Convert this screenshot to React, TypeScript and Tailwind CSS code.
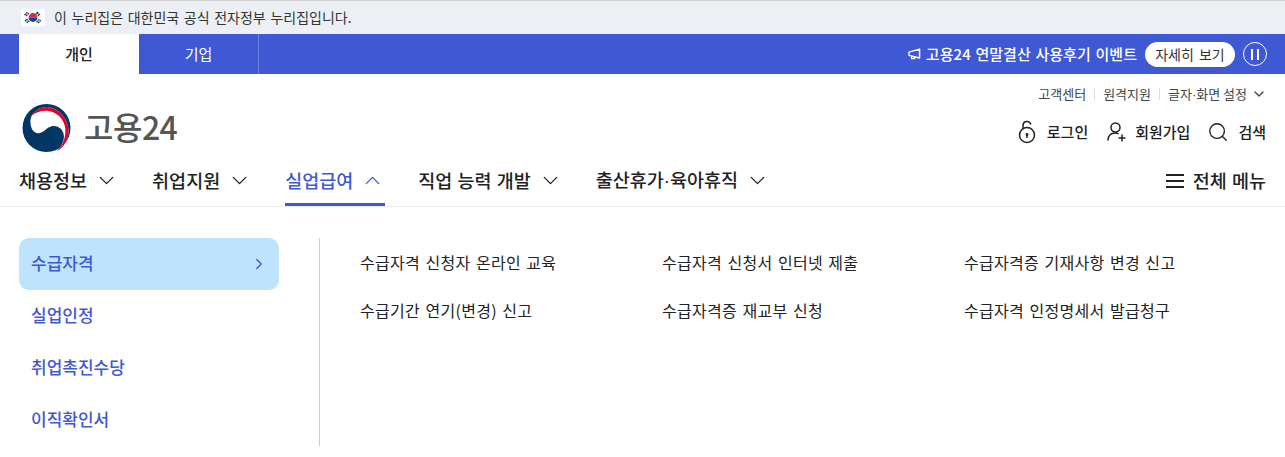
import React from "react";
import { ChevronDown, ChevronUp, ChevronRight, Search } from "lucide-react";

const FONT = "font-['Noto_Sans_CJK_KR','Noto_Sans',sans-serif]";

function Flag() {
  return (
    <svg width="24" height="17" viewBox="0 0 24 17" className="shrink-0">
      <rect width="24" height="17" fill="#fff" />
      <path d="M7.600 8.500a4.400 4.400 0 0 1 8.800 0z" fill="#cd2e3a" />
      <path d="M7.600 8.500a4.400 4.400 0 0 0 8.800 0z" fill="#0047a0" />
      <g stroke="#333" strokeWidth="1.300" strokeDasharray="1.800 .5">
        <path d="M3.500 6 6.500 3M5 7 8 4" />
        <path d="M16 3 19 6M15 4 18 7" />
        <path d="M4 11 7 14M5.500 10 8.500 13" />
        <path d="M17 14 20 11M15.500 13 18.500 10" />
      </g>
    </svg>
  );
}

function Logo() {
  return (
    <svg width="49" height="48" viewBox="0 0 48 48" className="shrink-0">
      <circle cx="24" cy="24" r="24" fill="#003764" />
      <path d="M34 47.500C42 43 46.500 35 46 26C45 13 35 3.500 24 3C17.500 3 12 7 9 12C7.500 15.500 7.500 20 9 24C10.500 28 14 30 17.500 29C21 28 23 25.500 26 23.500C30 21 35 21.500 38.500 25C42.500 29 42 36 39.500 40C38 43 36 45.500 34 47.500Z" fill="#fff" />
      <path d="M34 47.500C42 43 46.500 35 46 26C45 13 35 3.500 24 3C17.500 3 12 7 9 12C13 8.500 18 6.500 24 6.800C34 7.500 42 15 42.800 25C43.500 34 40 42 34 47.500Z" fill="#e2002d" />
    </svg>
  );
}

function LockIcon() {
  return (
    <svg width="20" height="24" viewBox="0 0 20 24" fill="none" stroke="#222" strokeWidth="1.500" className="shrink-0">
      <circle cx="10" cy="15" r="7.500" />
      <path d="M6 8.500V5.500a4 4 0 0 1 7.700-1.500" strokeLinecap="round" />
      <circle cx="10" cy="14.500" r="1.400" fill="#222" stroke="none" />
      <path d="M10 14.500v3.500" />
    </svg>
  );
}

function UserPlus() {
  return (
    <svg width="22" height="22" viewBox="0 0 22 22" fill="none" stroke="#222" strokeWidth="1.500" className="shrink-0">
      <circle cx="9.500" cy="6.500" r="4.500" />
      <path d="M2 19c.3-4.500 3-7 7-7 1.200 0 2.200.2 3 .6" strokeLinecap="round" />
      <path d="M16 13.500v7M12.500 17h7" />
    </svg>
  );
}

function Megaphone() {
  return (
    <svg width="13" height="12" viewBox="0 0 14 13" fill="none" stroke="#fff" strokeWidth="1.600" className="shrink-0">
      <path d="M1 4.500 12.500 1.200v9.600L1 8z" strokeLinejoin="round" />
      <path d="M4 8.500v3h3V9.500" />
    </svg>
  );
}

function MenuIcon() {
  return (
    <svg width="18" height="14" viewBox="0 0 18 14" stroke="#222" strokeWidth="2" className="shrink-0">
      <path d="M0 1h18M0 7h18M0 13h18" />
    </svg>
  );
}

function Dot() {
  return <span className="font-['Liberation_Sans']">·</span>;
}

function NavItem({ label, active }: { label: React.ReactNode; active?: boolean }) {
  return (
    <div className={active ? "flex h-full items-center gap-[7px] border-b-[3px] border-[#3f58d4] pb-[3px] text-[#3f58d4]" : "flex h-full items-center gap-[7px] border-b-[3px] border-transparent pb-[3px] text-[#222]"}>
      <span className="text-[18.500px] font-medium leading-none [word-spacing:1px]">{label}</span>
      {active ? <ChevronUp size={25} strokeWidth={1.300} /> : <ChevronDown size={25} strokeWidth={1.300} />}
    </div>
  );
}

const links = [
  "수급자격 신청자 온라인 교육",
  "수급자격 신청서 인터넷 제출",
  "수급자격증 기재사항 변경 신고",
  "수급기간 연기(변경) 신고",
  "수급자격증 재교부 신청",
  "수급자격 인정명세서 발급청구",
];

export default function App() {
  return (
    <div className={`${FONT} h-[457px] w-[1285px] overflow-hidden bg-white text-[#222]`}>
      <div className="flex h-[34px] items-center gap-[8px] border-t border-[#cfcfcf] bg-[#eceff4] pl-[21px] text-[14px]">
        <Flag />
        <span className="ml-[1px] text-[#333] [word-spacing:1.500px]">이 누리집은 대한민국 공식 전자정부 누리집입니다.</span>
      </div>

      <div className="flex h-[40px] items-stretch bg-[#3f58d4] pl-[19px] pr-[18px]">
        <div className="flex w-[120px] items-center justify-center bg-white text-[15px] font-medium text-[#222]">개인</div>
        <div className="flex w-[120px] items-center justify-center border-r border-[#6d80e0] text-[15px] text-white">기업</div>
        <div className="ml-auto flex items-center text-white">
          <Megaphone />
          <span className="ml-[5px] text-[15px] font-medium tracking-[0.05px] [word-spacing:1.200px]">고용24 연말결산 사용후기 이벤트</span>
          <span className="ml-[8px] flex h-[25px] w-[90px] items-center justify-center rounded-full bg-white text-[14px] text-[#333] [word-spacing:2px]">자세히 보기</span>
          <span className="ml-[8px] flex size-[24px] items-center justify-center gap-[4px] rounded-full border-[1.5px] border-white">
            <span className="h-[11px] w-[2px] bg-white" />
            <span className="h-[11px] w-[2px] bg-white" />
          </span>
        </div>
      </div>

      <div className="h-[133px] border-b border-[#ececec]">
        <div className="flex h-[87px] justify-between pl-[22px] pr-[19px]">
          <div className="flex items-start gap-[13px] pt-[30px]">
            <Logo />
            <span className="mt-[4px] text-[32px] leading-[36px] font-medium tracking-[-0.5px] text-[#555]">고용24</span>
          </div>
          <div className="flex flex-col items-end pt-[11px]">
            <div className="flex h-[18px] items-center text-[13px] text-[#444]">
              <span>고객센터</span>
              <span className="mx-[8px] h-[12px] w-px bg-[#ddd]" />
              <span>원격지원</span>
              <span className="mx-[8px] h-[12px] w-px bg-[#ddd]" />
              <span>글자<Dot />화면 설정</span>
              <ChevronDown size={16} strokeWidth={2} className="mr-[-1px] ml-[4px]" />
            </div>
            <div className="mt-[17px] flex items-center text-[15px] font-medium text-[#222]">
              <LockIcon />
              <span className="ml-[10px]">로그인</span>
              <span className="ml-[18px]"><UserPlus /></span>
              <span className="ml-[7px]">회원가입</span>
              <Search size={22} strokeWidth={1.500} className="ml-[17px]" />
              <span className="ml-[9px]">검색</span>
            </div>
          </div>
        </div>
        <div className="flex h-[45px] items-stretch justify-between pl-[19px] pr-[19px]">
          <div className="flex gap-[33px]">
            <NavItem label="채용정보" />
            <NavItem label="취업지원" />
            <NavItem label="실업급여" active />
            <NavItem label="직업 능력 개발" />
            <NavItem label={<>출산휴가<Dot />육아휴직</>} />
          </div>
          <div className="flex items-center gap-[9px] border-b-[3px] border-transparent pb-[3px]">
            <MenuIcon />
            <span className="text-[18.500px] leading-none font-medium [word-spacing:1px]">전체 메뉴</span>
          </div>
        </div>
      </div>

      <div className="flex px-[19px] pt-[31px]">
        <div className="w-[260px] shrink-0 text-[17px] font-medium text-[#3f58d4]">
          <div className="flex h-[52px] items-center justify-between rounded-[10px] bg-[#c0e3fd] pr-[11px] pb-[3px] pl-[12px]">
            <span>수급자격</span>
            <ChevronRight size={18} strokeWidth={1.800} className="mt-[3px]" />
          </div>
          <div className="flex h-[52px] items-center pb-[3px] pl-[12px]">실업인정</div>
          <div className="flex h-[52px] items-center pb-[3px] pl-[12px]">취업촉진수당</div>
          <div className="flex h-[52px] items-center pb-[3px] pl-[12px]">이직확인서</div>
        </div>
        <div className="ml-[40px] h-[208px] w-px bg-[#cccccc]" />
        <div className="grid h-fit flex-1 grid-cols-[302px_302px_1fr] pl-[40px] text-[16px] tracking-[0.3px] text-[#222] [word-spacing:1.500px]">
          {links.map((l) => (
            <div key={l} className="flex h-[48px] items-center pb-[1px] whitespace-nowrap">{l}</div>
          ))}
        </div>
      </div>
    </div>
  );
}
